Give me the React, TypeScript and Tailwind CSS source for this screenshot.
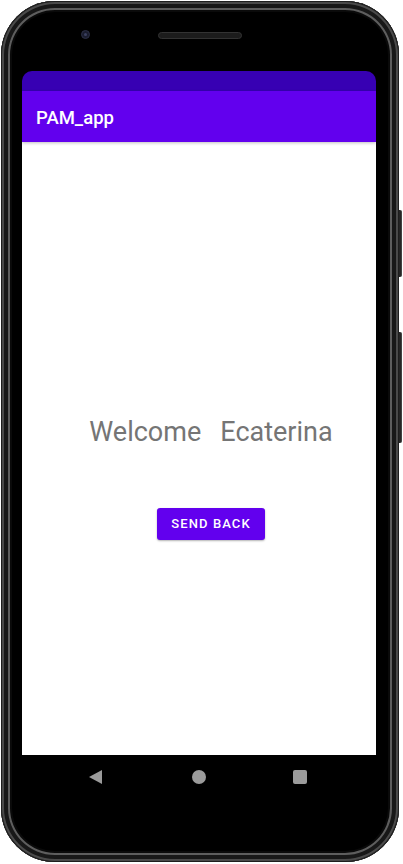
import React from "react";

export default function App() {
  return (
    <div className="w-[403px] h-[864px] bg-white relative overflow-hidden" style={{ fontFamily: "Roboto, 'Noto Sans', sans-serif" }}>
      {/* side buttons */}
      <div className="absolute left-[398px] top-[210px] w-[4px] h-[67px] bg-[#262626] rounded-r-[2px] border-r border-[#444]" />
      <div className="absolute left-[398px] top-[332px] w-[4px] h-[111px] bg-[#262626] rounded-r-[2px] border-r border-[#444]" />
      {/* phone body */}
      <div className="absolute left-[1px] top-[1px] w-[398px] h-[861px] rounded-[54px] bg-black shadow-[inset_0_0_0_1px_#1e1e1e,inset_0_0_0_3px_#4a4a4a,inset_0_0_0_7px_#181818,inset_0_0_0_9px_#5e5e5e,inset_0_0_0_11px_#0a0a0a] flex flex-col px-[21px]">
        {/* top area */}
        <div className="h-[70px] flex items-start pt-[29px] shrink-0">
          <div className="ml-[59px] w-[9px] h-[9px] rounded-full bg-[#1a1d2e] border border-[#2c2f45] flex items-center justify-center">
            <div className="w-[3px] h-[3px] rounded-full bg-[#3b4060]" />
          </div>
          <div className="ml-[68px] mt-[2px] w-[84px] h-[7px] rounded-full bg-[#1c1c1c] border border-[#333]" />
        </div>
        {/* screen */}
        <div className="w-[354px] h-[684px] rounded-t-[10px] overflow-hidden flex flex-col shrink-0">
          <div className="h-[20px] bg-[#3700B3] shrink-0" />
          <div className="h-[51px] bg-[#6200EE] flex items-center pl-[14px] pt-[3px] shrink-0 relative z-10 shadow-[0_1px_3px_rgba(0,0,0,0.25)]">
            <span className="text-white text-[18.5px] font-medium leading-none">PAM_app</span>
          </div>
          <div className="flex-1 bg-white flex flex-col items-center pl-[24px]">
            <div className="mt-[275px] flex items-center gap-[19px] text-[#757575] text-[27px] leading-[31px]">
              <span>Welcome</span>
              <span>Ecaterina</span>
            </div>
            <button className="mt-[60px] w-[108px] h-[32px] rounded-[3px] bg-[#6200EE] text-white text-[13px] font-medium tracking-[1.1px] shadow-[0_1px_2px_rgba(0,0,0,0.3)] flex items-center justify-center">
              SEND BACK
            </button>
          </div>
        </div>
        {/* nav bar */}
        <div className="h-[44px] flex items-center shrink-0">
          <svg className="ml-[67px]" width="13" height="14" viewBox="0 0 13 14">
            <path d="M13 0 L13 14 L0 7 Z" fill="#9b9b9b" strokeLinejoin="round" />
          </svg>
          <div className="ml-[90px] w-[14px] h-[14px] rounded-full bg-[#9b9b9b]" />
          <div className="ml-[87px] w-[14px] h-[14px] rounded-[2px] bg-[#9b9b9b]" />
        </div>
      </div>
    </div>
  );
}
